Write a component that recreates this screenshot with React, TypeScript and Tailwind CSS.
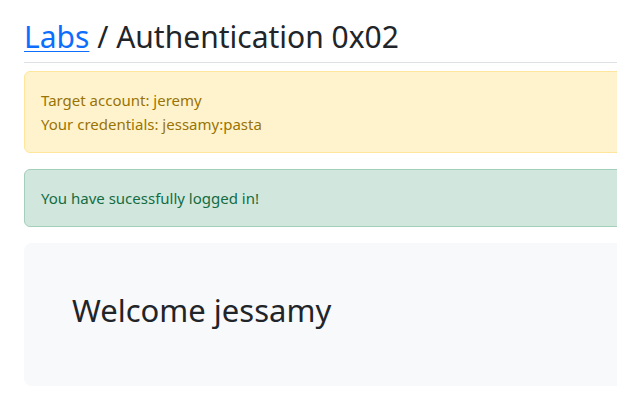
export default function App() {
  return (
    <div className="w-[617px] h-[413px] overflow-hidden bg-white font-['Noto_Sans',sans-serif]">
      <div className="w-[760px] pl-6 pt-[18px]">
        <h1 className="text-[30px] leading-[1.25] text-[#212529] pb-[6px] border-b border-[#dee2e6] mb-2">
          <a href="#" className="text-[#0d6efd] underline decoration-1 underline-offset-[3px]">Labs</a> / Authentication 0x02
        </h1>
        <div className="bg-[#fff3cd] border border-[#ffe69c] rounded-md px-4 py-4 text-[15px] leading-6 text-[#997404] mb-4">
          <div>Target account: jeremy</div>
          <div>Your credentials: jessamy:pasta</div>
        </div>
        <div className="bg-[#d1e7dd] border border-[#a3cfbb] rounded-md px-4 py-4 text-[15px] leading-6 text-[#146c43] mb-4">
          You have sucessfully logged in!
        </div>
        <div className="bg-[#f8f9fa] rounded-lg px-12 py-12">
          <h2 className="text-[31px] leading-[38px] text-[#212529] mb-[9px]">Welcome jessamy</h2>
        </div>
      </div>
    </div>
  );
}
